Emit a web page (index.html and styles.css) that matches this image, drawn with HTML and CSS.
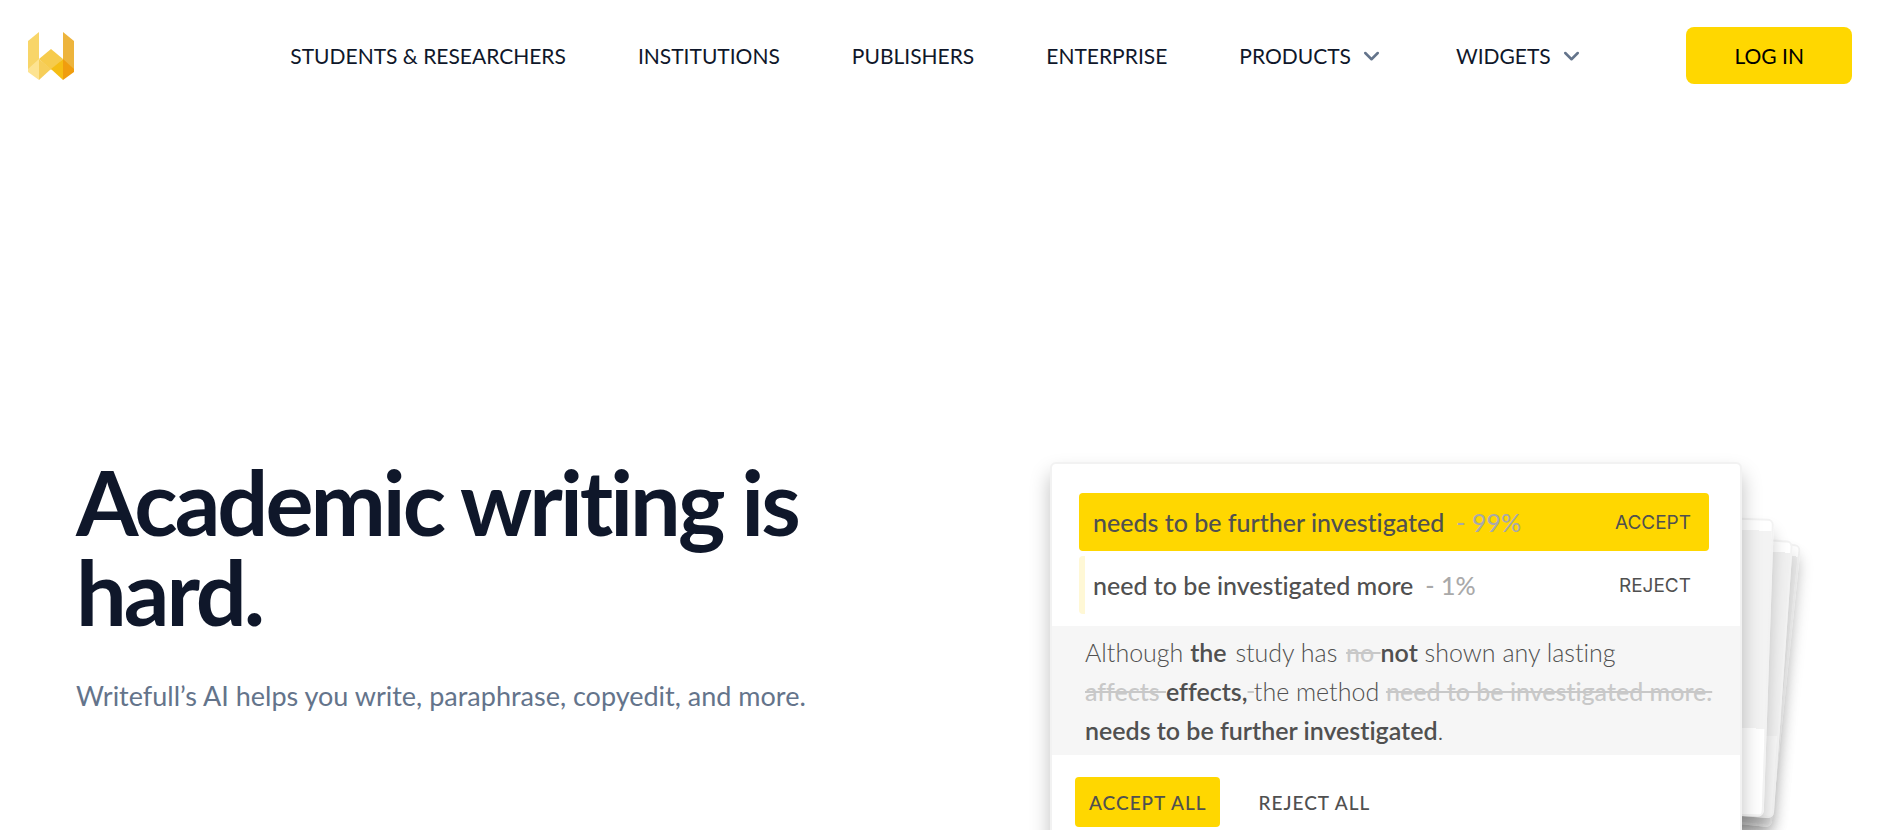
FILE: index.html
```
<!DOCTYPE html>
<html lang="en">
<head>
    <meta charset="UTF-8">
    <meta name="viewport" content="width=device-width, initial-scale=1.0">
    <title>Writefull</title>
    <link rel="stylesheet" href="styles.css">
</head>
<body>
    <header class="header">
        <div class="header-side">
            <a href="#" class="logo" aria-label="Writefull home">
                <svg width="46" height="48" viewBox="0 0 46 48">
                    <path fill="#f8d568" d="M0 9 11 0v28L0 38z"/>
                    <path fill="#edb43c" d="M46 9 35 0v28l11 10z"/>
                    <path fill="#f6cb4c" d="M23 17 35 27 23 38 11 27z"/>
                    <path fill="#fde391" d="M0 37 11 27v21L0 40z"/>
                    <path fill="#f6ce5a" d="M11 27 23 37 11 48z"/>
                    <path fill="#f5bd14" d="M35 27 23 37l12 11z"/>
                    <path fill="#f09d0e" d="M46 37 35 27v21l11-8z"/>
                </svg>
            </a>
        </div>

        <nav class="nav">
            <a href="#">STUDENTS &amp; RESEARCHERS</a>
            <a href="#">INSTITUTIONS</a>
            <a href="#">PUBLISHERS</a>
            <a href="#">ENTERPRISE</a>
            <button type="button" class="nav-menu">
                PRODUCTS
                <svg width="25" height="25" viewBox="0 0 20 20"><path d="M5 8l5 5 5-5"/></svg>
            </button>
            <button type="button" class="nav-menu">
                WIDGETS
                <svg width="25" height="25" viewBox="0 0 20 20"><path d="M5 8l5 5 5-5"/></svg>
            </button>
        </nav>

        <div class="header-side header-right">
            <button type="button" class="login">LOG IN</button>
        </div>
    </header>

    <main class="hero">
        <section class="hero-text">
            <h1>Academic writing is hard.</h1>
            <p>Writefull’s AI helps you write, paraphrase, copyedit, and more.</p>
        </section>

        <section class="demo">
            <!-- Sheets stacked behind the front card -->
            <div class="sheet sheet-back"></div>
            <div class="sheet sheet-middle"></div>
            <div class="sheet sheet-front"></div>

            <div class="card">
                <div class="options">
                    <div class="option option-selected">
                        <span>needs to be further investigated</span>
                        <span class="score">- 99%</span>
                        <button type="button">ACCEPT</button>
                    </div>
                    <div class="option">
                        <span>need to be investigated more</span>
                        <span class="score">- 1%</span>
                        <button type="button">REJECT</button>
                    </div>
                </div>

                <p class="sample">
                    Although <b class="added">the</b> study has <del class="removed">no </del><b>not</b> shown any lasting<br>
                    <del>affects </del><b>effects,</b><del> </del>the method <del>need to be investigated more.</del><br>
                    <b>needs to be further investigated</b>.
                </p>

                <div class="actions">
                    <button type="button" class="accept-all">ACCEPT ALL</button>
                    <button type="button">REJECT ALL</button>
                </div>
            </div>
        </section>
    </main>
</body>
</html>
```
FILE: styles.css
```
* {
    margin: 0;
    padding: 0;
    box-sizing: border-box;
}

body {
    font-family: Lato, sans-serif;
    background-color: #fff;
    color: #0f172a;
    overflow-x: hidden;
}

a {
    color: inherit;
    text-decoration: none;
}

button {
    font: inherit;
    color: inherit;
    background: none;
    border: none;
    cursor: pointer;
}

/* Header */
.header {
    display: flex;
    align-items: center;
    padding: 27px 30px;
}

.header-side {
    flex: 1;
    display: flex;
}

.header-right {
    justify-content: flex-end;
}

.logo {
    display: block;
    height: 48px;
    margin-left: -2px;
}

.nav {
    display: flex;
    align-items: center;
    gap: 72px;
    margin-right: 8px;
    font-size: 21px;
    line-height: 30px;
    white-space: nowrap;
}

.nav-menu {
    display: flex;
    align-items: center;
    gap: 8px;
}

.nav-menu svg {
    fill: none;
    stroke: #64748b;
    stroke-width: 2;
    stroke-linecap: round;
    stroke-linejoin: round;
}

.login {
    padding: 0 48px;
    height: 57px;
    border-radius: 8px;
    background-color: #ffd700;
    color: #000;
    font-size: 21px;
    white-space: nowrap;
}

/* Hero */
.hero {
    display: grid;
    grid-template-columns: 1fr 1fr;
    gap: 218px;
    padding: 351px 76px 80px;
}

.hero-text {
    margin-top: -6px;
}

.hero-text h1 {
    font-size: 90px;
    line-height: 90px;
    font-weight: 700;
    letter-spacing: -3px;
}

.hero-text p {
    margin-top: 40px;
    font-size: 27px;
    line-height: 40px;
    color: #64748b;
}

/* Demo card */
.demo {
    position: relative;
    padding-right: 64px;
}

.card {
    position: relative;
    border: 2px solid #f2f2f2;
    border-radius: 6px;
    background-color: #fff;
    color: #505050;
    font-variant-ligatures: none;
    box-shadow: 0 12px 20px rgba(0, 0, 0, 0.25);
}

.options {
    display: flex;
    flex-direction: column;
    gap: 5px;
    padding: 29px 31px 12px 27px;
    font-size: 25px;
    font-weight: 500;
}

.option {
    display: flex;
    align-items: center;
    height: 58px;
    padding: 0 18px 0 8px;
    border-left: 6px solid #fff8d6;
    border-radius: 4px;
}

.option-selected {
    background-color: #ffd700;
    border-left-color: #ffd700;
}

.option button {
    margin-left: auto;
    font-family: Inter, sans-serif;
    font-size: 19px;
    font-weight: 400;
}

.score {
    margin-left: 12px;
    color: #a9a9a9;
}

.sample {
    padding: 7px 0 5px 33px;
    background-color: #f6f6f6;
    font-size: 25px;
    line-height: 39px;
    font-weight: 300;
    white-space: nowrap;
}

.sample b {
    font-weight: 600;
}

.sample del {
    color: #c8c8c8;
    font-weight: 500;
}

.sample .added {
    margin-right: 2px;
}

.sample .removed {
    margin-left: 2px;
}

.actions {
    display: flex;
    gap: 24px;
    padding: 22px 23px 30px;
    font-size: 19px;
    font-weight: 500;
}

.actions button {
    height: 50px;
    padding: 0 14px;
    border-radius: 4px;
    letter-spacing: 1px;
}

.actions .accept-all {
    background-color: #ffd700;
}

/* Stacked sheets */
.sheet {
    position: absolute;
    width: 240px;
    border: 2px solid #f2f2f2;
    border-radius: 6px;
    transform-origin: top right;
    box-shadow: 0 12px 16px rgba(0, 0, 0, 0.2);
}

.sheet-front {
    top: 57px;
    right: 32px;
    height: 298px;
    background: linear-gradient(#fff 10px, #f3f3f3 10px, #f3f3f3 208px, #fff 208px);
    transform: rotate(2deg);
}

.sheet-middle {
    top: 79px;
    right: 13px;
    height: 278px;
    background: linear-gradient(#fff 10px, #f0f0f0 10px, #f0f0f0 194px, #f6f6f6 194px);
    transform: rotate(4deg);
}

.sheet-back {
    top: 83px;
    right: 5px;
    height: 284px;
    background: linear-gradient(#fff 10px, #eee 10px);
    transform: rotate(6deg);
}
```
